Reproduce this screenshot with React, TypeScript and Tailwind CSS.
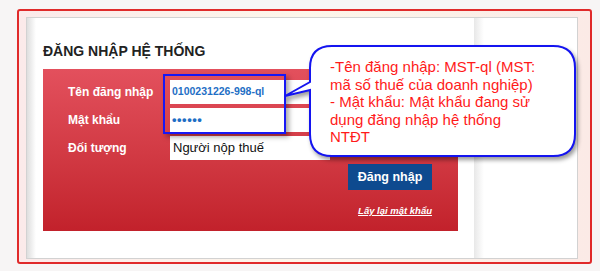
import React from 'react';

const rows = [
  { label: 'Tên đăng nhập', value: '0100231226-998-ql', kind: 'user' },
  { label: 'Mật khẩu', value: '••••••', kind: 'pass' },
  { label: 'Đối tượng', value: 'Người nộp thuế', kind: 'select' },
];

const Callout: React.FC = () => (
  <>
    <svg
      className="absolute left-[284px] top-[45px] drop-shadow-[2px_3px_2px_rgba(0,0,0,0.4)]"
      width="294"
      height="116"
      viewBox="0 0 294 116"
    >
      <path
        d="M48 1 H269 Q291 1 291 23 V89 Q291 111 269 111 H48 Q26 111 26 89 V45 L1 51 L26 37 V23 Q26 1 48 1 Z"
        fill="#ffffff"
        stroke="#1414f0"
        strokeWidth="2"
      />
    </svg>
    <div className="absolute left-[330px] top-[58px] text-[15px] leading-[17.5px] text-[#ff1a1a] font-['Liberation_Sans',Arial,sans-serif]">
      <div>-Tên đăng nhập: MST-ql (MST:</div>
      <div>mã số thuế của doanh nghiệp)</div>
      <div>- Mật khẩu: Mật khẩu đang sử</div>
      <div>dụng đăng nhập hệ thống</div>
      <div>NTĐT</div>
    </div>
  </>
);

const App: React.FC = () => {
  return (
    <div className="relative w-[600px] h-[271px] bg-[#f7f5f5] pt-[9px] pl-[17px] font-['Liberation_Sans',Arial,sans-serif]">
      {/* khung viền đỏ */}
      <div className="w-[575px] h-[255px] border-2 border-[#e02a2a] rounded-[3px] pl-[7px] pt-[6px] bg-linear-to-r from-[#fbeaea] via-[#fdf6ea] to-[#fbeae6]">
        <div className="w-[552px] h-[242px] border border-[#d2d2d2] bg-white flex">
          <div className="w-[447px] h-full pl-[16px] pt-[25px] bg-[linear-gradient(to_right,#dedede,#ffffff_9px)]">
            <div className="text-[14px] leading-[16px] font-bold text-[#222]">ĐĂNG NHẬP HỆ THỐNG</div>

            <div className="mt-[10px] w-[415px] h-[162px] pl-[25px] pr-[26px] pt-[11px] bg-linear-to-b from-[#e3505d] to-[#c2212b]">
              <div className="flex flex-col gap-[4px]">
                {rows.map((r) => (
                  <div key={r.label} className="flex items-center">
                    <div className="w-[102px] text-[12px] font-bold text-white">{r.label}</div>
                    <div className="w-[160px] h-[24px] bg-white flex items-center pl-[2px]">
                      {r.kind === 'user' && (
                        <span className="text-[10.5px] font-bold text-[#1f6fc5]">{r.value}</span>
                      )}
                      {r.kind === 'pass' && (
                        <span className="text-[13px] font-bold tracking-[0.5px] text-[#1f6fc5]">{r.value}</span>
                      )}
                      {r.kind === 'select' && (
                        <span className="text-[13px] text-[#111] pl-[1px]">{r.value}</span>
                      )}
                    </div>
                  </div>
                ))}
              </div>

              <div className="mt-[4px] flex justify-end">
                <button className="w-[84px] h-[26px] bg-[#0e4a8f] text-white text-[12.5px] font-bold">
                  Đăng nhập
                </button>
              </div>

              <div className="mt-[15px] text-right text-[9.5px] leading-[12px] font-bold italic underline text-white">
                Lấy lại mật khẩu
              </div>
            </div>
          </div>
          <div className="flex-1 h-full bg-[linear-gradient(to_right,#e8e8e8,#ffffff_10px)]" />
        </div>
      </div>

      {/* khung xanh đánh dấu ô nhập */}
      <div className="absolute left-[163px] top-[74px] w-[123px] h-[60px] border-2 border-[#1717f5] shadow-[3px_3px_5px_rgba(0,0,0,0.35)]" />

      <Callout />
    </div>
  );
};

export default App;
